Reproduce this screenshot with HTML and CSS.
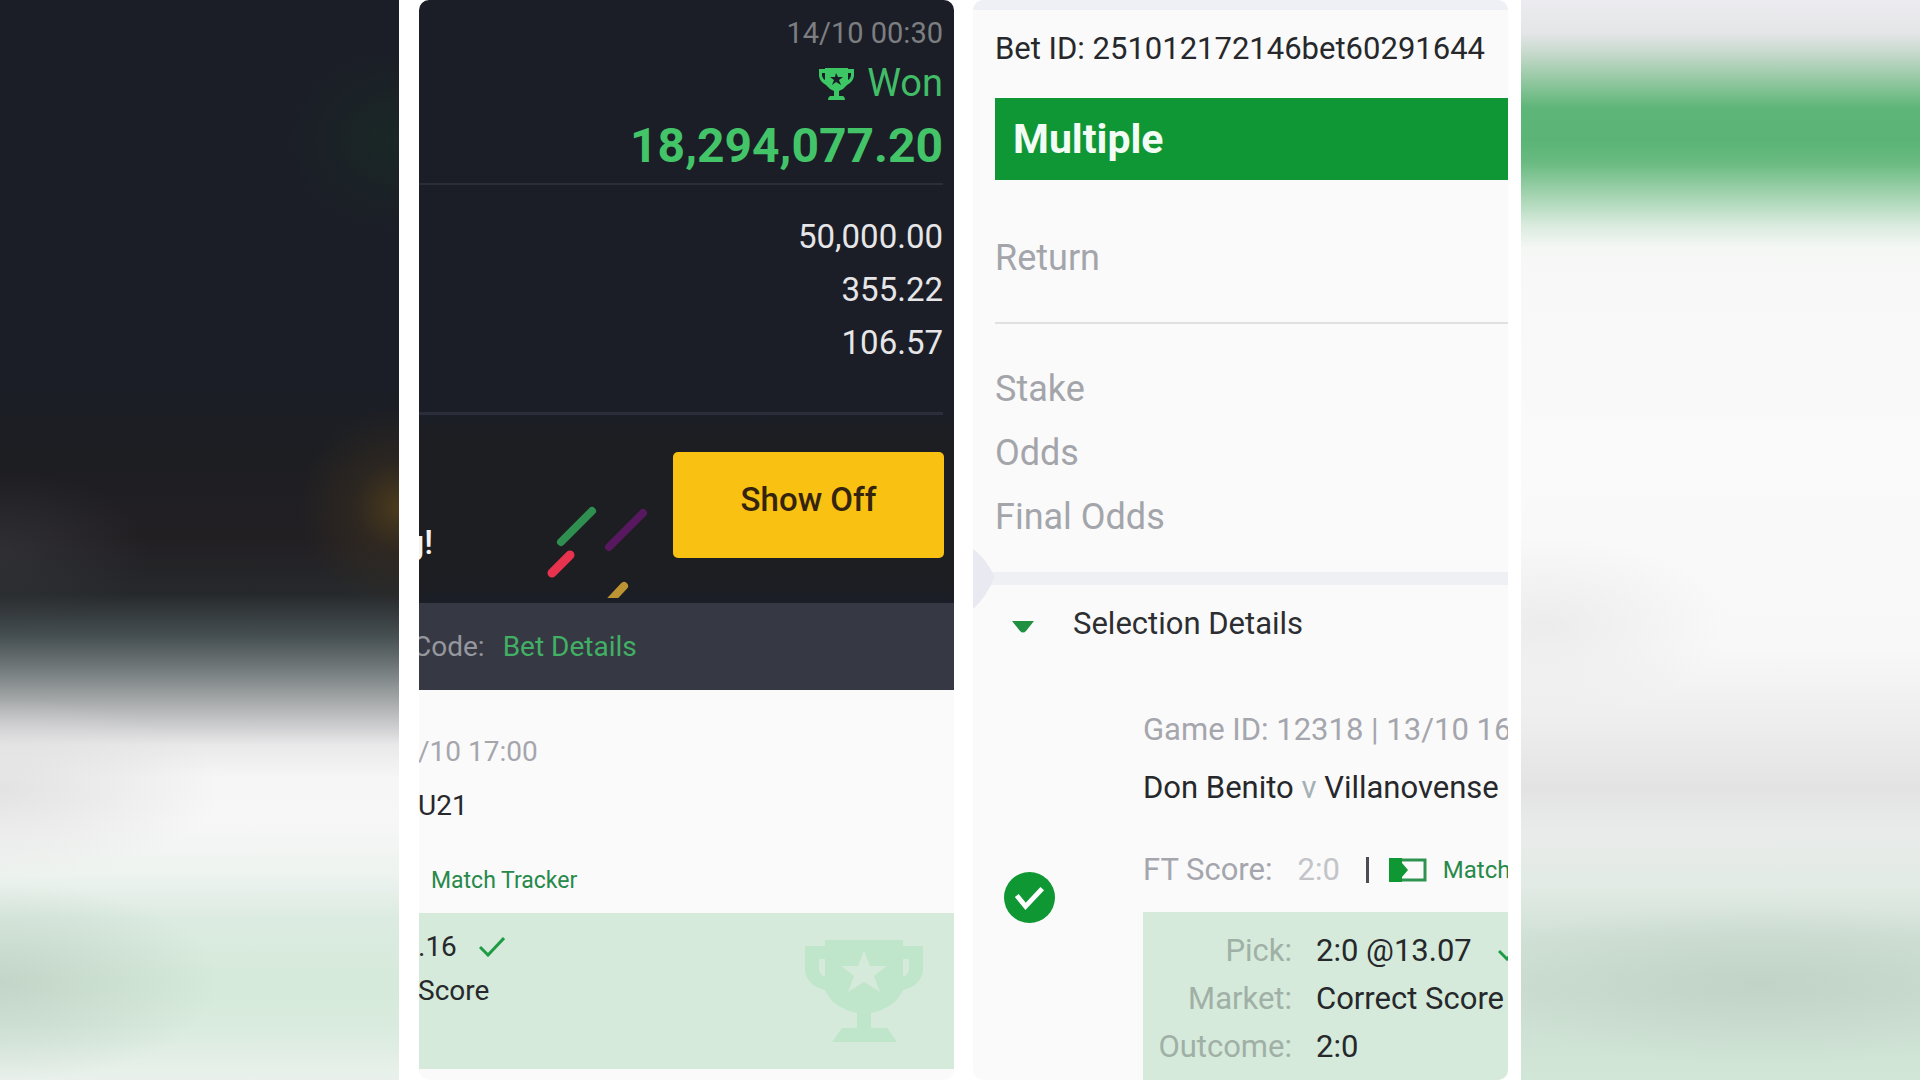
FILE: index.html
```html
<!DOCTYPE html>
<html lang="en">
<head>
<meta charset="utf-8">
<meta name="viewport" content="width=device-width, initial-scale=1">
<title>Bet slips</title>
<link rel="stylesheet" href="styles.css">
</head>
<body>
<main class="page">
  <div class="backdrop backdrop-dark"></div>

  <section class="card slip" aria-label="Won slip">
    <header class="result">
      <time class="result-date">14/10 00:30</time>
      <div class="result-status">
        <svg class="trophy-small" viewBox="0 0 35 32" aria-hidden="true">
          <path fill="currentColor" fill-rule="evenodd" d="M6 0H29V1H35V8Q34 14 28 17Q25 21 20 23V28H24Q26 29 26 32H9Q9 29 11 28H15V23Q10 21 7 17Q1 14 0 8V1H6ZM3 5V8Q4 11 6 12V5ZM29 5V12Q31 11 32 8V5ZM17 5L16 9H11L15 12L13 17L17 14L22 17L20 12L24 9H19Z"/>
        </svg>
        <span>Won</span>
      </div>
      <strong class="result-amount">18,294,077.20</strong>
    </header>
    <div class="stats">
      <span>50,000.00</span>
      <span>355.22</span>
      <span>106.57</span>
    </div>
    <div class="promo">
      <span class="promo-text">g!</span>
      <svg class="confetti" viewBox="0 0 110 93" aria-hidden="true">
        <g fill="none" stroke-width="8" stroke-linecap="round">
          <path stroke="#2f8f50" d="M16 37L47 6"/>
          <path stroke="#58185f" d="M64 42L98 8"/>
          <path stroke="#e8334f" stroke-width="9" d="M7 68L25 50"/>
          <path stroke="#bd9433" d="M64 97L79 81"/>
        </g>
      </svg>
      <button class="show-off" type="button">Show Off</button>
    </div>
    <div class="code-bar">
      <span class="code-label">Code:</span>
      <a class="code-link" href="#details">Bet Details</a>
    </div>
    <div class="event">
      <time class="event-line muted">/10 17:00</time>
      <span class="event-line">U21</span>
      <a class="tracker" href="#tracker">Match Tracker</a>
    </div>
    <div class="outcome">
      <div class="outcome-text">
        <span class="outcome-line">.16
          <svg class="tick" viewBox="0 0 26 20" aria-hidden="true"><path fill="none" stroke="#1f9a45" stroke-width="3" d="M1 10L9 18L25 1"/></svg>
        </span>
        <span class="outcome-line">Score</span>
      </div>
      <svg class="trophy-large" viewBox="0 0 118 102" aria-hidden="true">
        <path fill="currentColor" fill-rule="evenodd" d="M20 0H98V6H118V30Q116 46 98 50Q90 68 66 73V88H82L92 102H27L37 88H52V73Q28 68 20 50Q2 46 0 30V6H20ZM14 19V30Q15 35 20 37V19ZM98 19V37Q103 35 104 30V19ZM59 10L53 26H36L49 36L43 52L59 42L75 52L69 36L82 26H65Z"/>
      </svg>
    </div>
  </section>

  <section class="card ticket" id="details" aria-label="Bet details">
    <div class="bet">
      <p class="bet-id">Bet ID: 251012172146bet60291644</p>
      <h1 class="bet-type">Multiple</h1>
      <p class="return">Return</p>
      <ul class="terms">
        <li>Stake</li>
        <li>Odds</li>
        <li>Final Odds</li>
      </ul>
      <svg class="notch" viewBox="0 0 22 60" aria-hidden="true"><path fill="#e9eaf1" d="M0 0Q12 8 22 28Q12 50 0 60Z"/></svg>
    </div>
    <button class="selection-toggle" type="button" aria-expanded="true">
      <svg class="caret" viewBox="0 0 22 12" aria-hidden="true"><path fill="#1f8f40" d="M0 0H22L14 10Q11 13 8 10Z"/></svg>
      <span>Selection Details</span>
    </button>
    <div class="selection">
      <div class="selection-state">
        <svg class="badge" viewBox="0 0 52 52" aria-hidden="true"><circle cx="26" cy="26" r="26" fill="#0f9733"/><path fill="none" stroke="#fff" stroke-width="5" d="M13 24L22 35L39 17"/></svg>
      </div>
      <div class="selection-body">
        <p class="game muted">Game ID: 12318 | 13/10 16</p>
        <p class="game">Don Benito <span class="versus">v</span> Villanovense</p>
        <div class="score">
          <span class="muted">FT Score:</span>
          <span class="score-value">2:0</span>
          <span class="bar"></span>
          <svg class="pitch" viewBox="0 0 38 24" aria-hidden="true"><path fill="none" stroke="#2f9350" stroke-width="3" d="M2 2H36V22H2Z"/><path fill="#0f9733" d="M0 0H13V5L19 12L13 19V24H0Z"/></svg>
          <a class="score-link" href="#tracker">Match</a>
        </div>
        <dl class="pick">
          <dt>Pick:</dt>
          <dd>2:0 @13.07 <svg class="tick" viewBox="0 0 26 20" aria-hidden="true"><path fill="none" stroke="#1f9a45" stroke-width="3" d="M1 10L9 18L25 1"/></svg></dd>
          <dt>Market:</dt>
          <dd>Correct Score</dd>
          <dt>Outcome:</dt>
          <dd>2:0</dd>
        </dl>
      </div>
    </div>
  </section>

  <div class="backdrop backdrop-light"></div>
</main>
</body>
</html>
```
FILE: styles.css
```css
* {
  box-sizing: border-box;
}

body {
  margin: 0;
  background: #fff;
  color: #26282b;
  font-family: Roboto, "Liberation Sans", sans-serif;
}

p,
h1,
ul,
dl,
dd {
  margin: 0;
  padding: 0;
}

a {
  text-decoration: none;
}

button {
  border: 0;
  font-family: inherit;
  cursor: pointer;
}

.page {
  display: grid;
  grid-template-columns: 419fr 535fr 554fr 412fr;
  min-height: 100vh;
}

.backdrop-dark {
  margin-right: 20px;
  background:
    radial-gradient(ellipse 100px 100px at 100% 47%, rgba(80, 62, 28, 0.9), rgba(60, 48, 30, 0.45) 45%, rgba(40, 34, 30, 0)),
    radial-gradient(ellipse 110px 90px at 100% 13%, rgba(26, 44, 38, 0.7), rgba(26, 34, 38, 0)),
    radial-gradient(ellipse 150px 80px at 0 51%, rgba(60, 62, 66, 0.5), rgba(50, 52, 56, 0)),
    radial-gradient(ellipse 220px 90px at 0 73%, rgba(220, 218, 219, 0.7), rgba(235, 235, 235, 0)),
    radial-gradient(ellipse 220px 100px at 0 91%, rgba(186, 204, 192, 0.7), rgba(213, 234, 218, 0)),
    linear-gradient(#1b1e27 0, #1b1e27 35%, #1d1e22 42%, #221f23 50%, #26292c 55%, #475052 59%, #737b7c 62%, #b9babc 66%, #e9e9ea 69%, #f6f6f6 72%, #f7f7f7 76%, #edf3ef 81%, #dcebe1 85%, #d5eada 91%, #d9ebde 95%, #eaf1ec 100%);
}

.backdrop-light {
  margin-left: 13px;
  background:
    radial-gradient(ellipse 180px 90px at 6% 58%, rgba(228, 228, 228, 0.6), rgba(244, 244, 244, 0)),
    radial-gradient(ellipse 300px 80px at 60% 91%, rgba(186, 204, 192, 0.6), rgba(205, 222, 210, 0)),
    linear-gradient(#ececf0 0, #e5e6e8 3%, #c5d9cb 5%, #88c498 8%, #5eb578 10%, #5bb476 13%, #68ba80 15%, #a2d3af 18%, #dcece0 21%, #f5f7f5 23%, #f8f8f8 26%, #fafafa 42%, #f8f8f8 60%, #efefef 66%, #e3e3e3 73%, #e9ebea 77%, #e2ebe5 82%, #d0e0d5 87%, #cbded1 92%, #d2e6d8 100%);
}

.card {
  display: flex;
  flex-direction: column;
  min-width: 0;
  overflow: hidden;
  border-radius: 10px;
  background: #fafafa;
}

.muted {
  color: #a5a6ad;
}

/* Won slip */

.slip {
  background: linear-gradient(#1b1e27, #1b1e27 412px, #1d1e22 440px, #1d1e22 580px, #1b1e27 603px, #fafafa 690px);
}

.result,
.stats {
  display: flex;
  flex-direction: column;
  align-items: flex-end;
  margin-right: 11px;
}

.result {
  padding: 13px 0 5px;
  border-bottom: 2px solid #2c2e37;
}

.result-date {
  color: #7d7e82;
  font-size: 29px;
  line-height: 40px;
}

.result-status {
  display: flex;
  align-items: center;
  gap: 13px;
  color: #41bd68;
  font-size: 38px;
  line-height: 61px;
}

.trophy-small {
  width: 35px;
  height: 32px;
  color: #3cc764;
}

.result-amount {
  color: #43c468;
  font-size: 48px;
  font-weight: 700;
  line-height: 64px;
}

.stats {
  padding: 25px 0 43px;
  border-bottom: 3px solid #2b2d3a;
  color: #e6e6e8;
  font-size: 33px;
  line-height: 53px;
}

.promo {
  display: flex;
  align-items: flex-start;
  height: 188px;
  padding-right: 10px;
}

.promo-text {
  display: flex;
  justify-content: flex-end;
  width: 14px;
  margin-top: 108px;
  color: #f4f4f4;
  font-size: 33px;
  font-weight: 500;
  line-height: 40px;
}

.confetti {
  width: 110px;
  height: 93px;
  margin: 90px 0 0 112px;
}

.show-off {
  width: 271px;
  height: 106px;
  margin: 37px 0 0 auto;
  padding: 0 0 12px;
  border-radius: 5px;
  background: #f9c111;
  color: #35240d;
  font-size: 33px;
  font-weight: 500;
}

.code-bar {
  display: flex;
  align-items: center;
  gap: 18px;
  height: 87px;
  background: #363944;
  font-size: 28px;
}

.code-label {
  margin-left: -6px;
  color: #96979e;
}

.code-link {
  color: #41b064;
}

.event {
  display: flex;
  flex-direction: column;
  align-items: flex-start;
  padding: 35px 0 12px;
  background: #fafafa;
}

.event-line {
  margin-left: -1px;
  font-size: 28px;
  line-height: 54px;
}

.tracker {
  margin: 28px 0 0 12px;
  color: #27894a;
  font-size: 23px;
  line-height: 40px;
}

.outcome {
  display: flex;
  justify-content: space-between;
  align-items: flex-start;
  min-height: 156px;
  padding-right: 31px;
  background: #d5eada;
}

.outcome-text {
  padding-top: 12px;
  font-size: 28px;
}

.outcome-line {
  display: flex;
  align-items: center;
  gap: 22px;
  margin-left: -1px;
  line-height: 44px;
}

.tick {
  flex: none;
  width: 26px;
  height: 20px;
}

.trophy-large {
  width: 118px;
  height: 102px;
  margin-top: 27px;
  color: #bfe6cb;
}

/* Bet details */

.ticket {
  margin-left: 19px;
  border-top: 10px solid #eff0f5;
}

.bet {
  position: relative;
  padding: 15px 0 23px 22px;
  border-bottom: 13px solid #eff0f4;
}

.bet-id {
  margin-bottom: 25px;
  font-size: 31px;
  line-height: 48px;
  white-space: nowrap;
}

.bet-type {
  padding-left: 18px;
  background: #0f9735;
  color: #f2fbf4;
  font-size: 41px;
  font-weight: 700;
  line-height: 82px;
}

.return {
  padding: 50px 0 36px;
  border-bottom: 2px solid #e0e1e3;
  color: #a3a5ab;
  font-size: 36px;
  line-height: 56px;
}

.terms {
  padding-top: 33px;
  color: #a3a5ab;
  font-size: 36px;
  line-height: 64px;
  list-style: none;
}

.notch {
  position: absolute;
  bottom: -37px;
  left: 0;
  width: 22px;
  height: 60px;
}

.selection-toggle {
  display: flex;
  align-items: center;
  gap: 39px;
  padding: 15px 0 0 39px;
  background: transparent;
  color: #2c2e31;
  font-size: 31px;
  line-height: 48px;
}

.caret {
  width: 22px;
  height: 12px;
  margin-top: 6px;
}

.selection {
  display: grid;
  flex: 1;
  grid-template-columns: 170px minmax(0, 1fr);
  padding-top: 53px;
}

.selection-state {
  display: flex;
  align-items: center;
  padding: 14px 0 0 31px;
}

.badge {
  width: 51px;
  height: 51px;
}

.selection-body {
  display: flex;
  flex-direction: column;
  font-size: 31px;
  white-space: nowrap;
}

.game {
  line-height: 58px;
}

.versus {
  color: #a3b0b5;
}

.score {
  display: flex;
  align-items: center;
  margin: 29px 0 18px;
  line-height: 48px;
}

.score-value {
  margin-left: 25px;
  color: #c3c4c8;
}

.bar {
  flex: none;
  width: 3px;
  height: 26px;
  margin: 0 20px 0 26px;
  background: #4b4d50;
}

.pitch {
  flex: none;
  width: 38px;
  height: 24px;
}

.score-link {
  margin-left: 16px;
  color: #27894a;
  font-size: 24px;
}

.pick {
  display: grid;
  flex: 1;
  grid-template-columns: 149px minmax(0, 1fr);
  grid-auto-rows: 48px;
  column-gap: 24px;
  padding: 15px 0 9px;
  background: #d5eada;
  line-height: 48px;
}

.pick dt {
  color: #a0b0a6;
  text-align: right;
}

.pick dd {
  display: flex;
  align-items: center;
  gap: 26px;
}
```
